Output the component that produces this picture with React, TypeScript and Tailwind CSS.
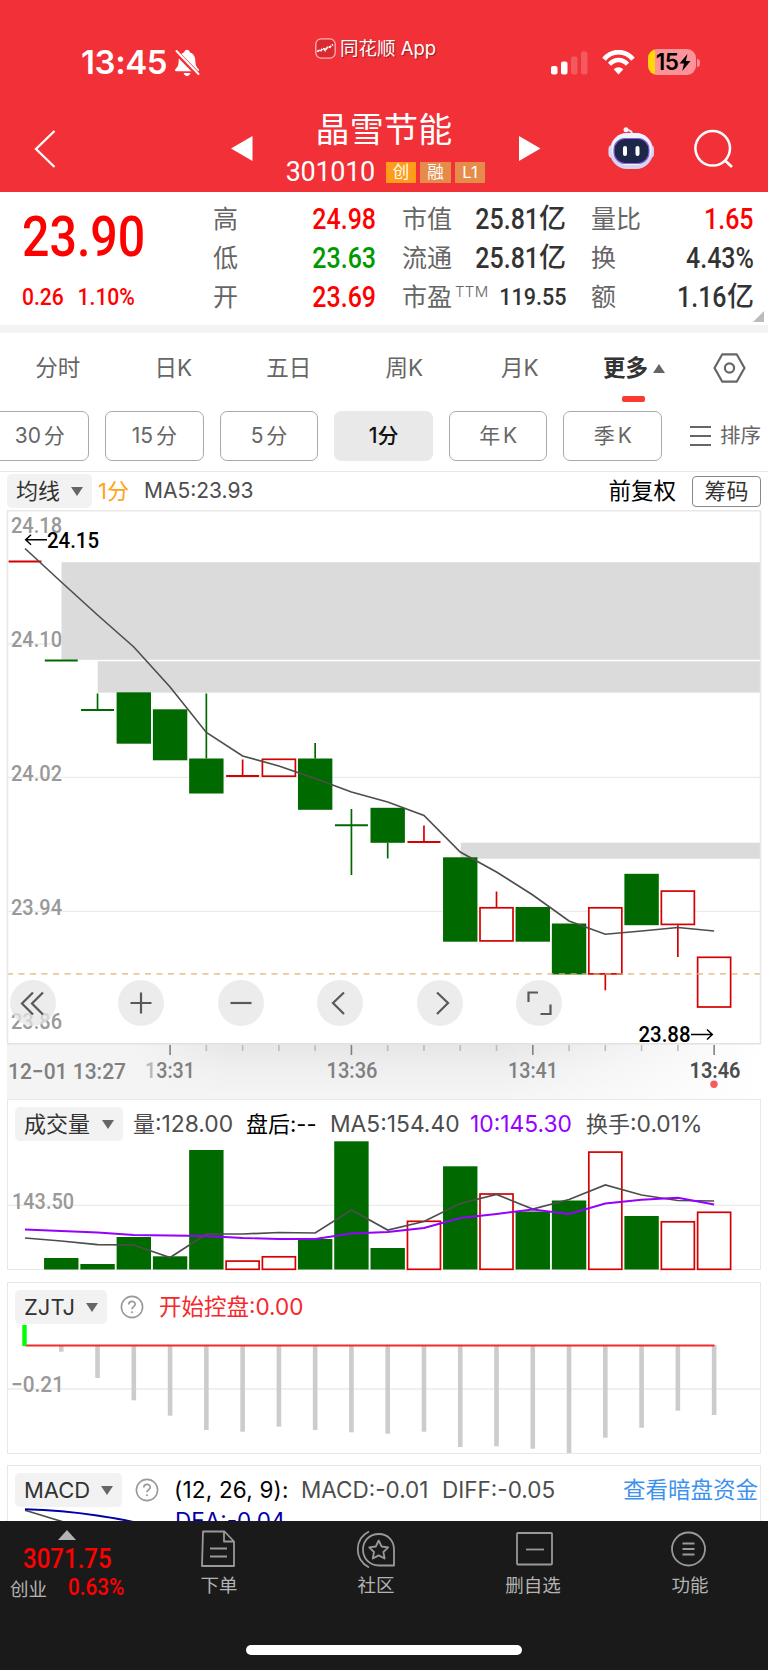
import type { ReactNode } from "react";

const X0 = 25;
const STEP = 36.27;
const cx = (i: number) => X0 + STEP * i;

const GREEN = "#006a00";
const RED = "#d60000";

type Candle = {
  kind: "up" | "down";
  top: number;
  bottom: number;
  high?: number;
  low?: number;
};

// top === bottom draws a flat bar
const candles: Candle[] = [
  { kind: "up", top: 561.5, bottom: 561.5 },
  { kind: "down", top: 660.5, bottom: 660.5 },
  { kind: "down", top: 710, bottom: 710, high: 693.5 },
  { kind: "down", top: 692.3, bottom: 743.7 },
  { kind: "down", top: 709.3, bottom: 760.3 },
  { kind: "down", top: 758.5, bottom: 793.5, high: 693.5 },
  { kind: "up", top: 776, bottom: 776, high: 759.5 },
  { kind: "up", top: 758.5, bottom: 777 },
  { kind: "down", top: 758.5, bottom: 809.8, high: 743 },
  { kind: "down", top: 825.3, bottom: 825.3, high: 809, low: 875 },
  { kind: "down", top: 807.8, bottom: 842.8, low: 858.5 },
  { kind: "up", top: 842, bottom: 842, high: 825.5 },
  { kind: "down", top: 857.3, bottom: 941.7 },
  { kind: "up", top: 907, bottom: 941.7, high: 891.5 },
  { kind: "down", top: 907, bottom: 941.7 },
  { kind: "down", top: 923.5, bottom: 974.5 },
  { kind: "up", top: 907, bottom: 974.7, low: 990.3 },
  { kind: "down", top: 873.8, bottom: 925.2 },
  { kind: "up", top: 890.3, bottom: 925.2, low: 957 },
  { kind: "up", top: 956.5, bottom: 1007.8 },
];

const ma5 = [
  548.5, 582, 615, 647, 687, 732.5, 756, 766, 778.5, 792, 802, 815.5, 852, 872,
  895, 921, 934.3, 931, 927.5, 931,
];

const volumeTops = [
  0, 1258, 1264, 1237, 1256.3, 1150, 1260.3, 1256, 1239, 1141.3, 1248, 1220.5,
  1166.3, 1193.2, 1211.5, 1200.5, 1151.3, 1216, 1221, 1211.5,
];
const volumeUp = [6, 7, 11, 13, 16, 18, 19];
const volMa5 = [
  1238, 1241, 1244.7, 1245, 1257.5, 1234, 1234, 1232.5, 1233, 1210, 1230, 1221.5,
  1203.5, 1194.5, 1209, 1199.5, 1185, 1195, 1200.5, 1201,
];
const volMa10 = [
  1229.5, 1231, 1232.5, 1235, 1235.5, 1236, 1238, 1239, 1239, 1233.5, 1232, 1228,
  1218, 1214, 1209.5, 1214, 1203.5, 1199.7, 1197.7, 1204.5,
];

const zjtjBottoms = [
  1346, 1351.7, 1378, 1400.3, 1415.7, 1430, 1431.7, 1426.7, 1430, 1432.3, 1433.7,
  1431.7, 1447, 1446.3, 1448.7, 1453, 1437.7, 1427.7, 1410.7, 1415,
];

const points = (ys: number[]) => ys.map((y, i) => `${cx(i)},${y}`).join(" ");

function Label({
  x,
  y,
  w,
  children,
  fill = "#999",
  weight = 500,
}: {
  x: number;
  y: number;
  w: number;
  children: ReactNode;
  fill?: string;
  weight?: number;
}) {
  return (
    <text
      x={x}
      y={y}
      textLength={w}
      lengthAdjust="spacingAndGlyphs"
      fill={fill}
      fontSize={22.5}
      fontWeight={weight}
    >
      {children}
    </text>
  );
}

function StatusBar() {
  return (
    <div className="flex h-[100px] items-start text-white">
      <div className="ml-[81px] mt-[42px] flex w-[234px] items-center">
        <span className="w-[93px] font-[Inter] text-[33px] font-semibold leading-[41px] tracking-[-0.4px]">
          13:45
        </span>
        <svg width="26" height="28" viewBox="0 0 26 28" fill="#fff">
          <path d="M13 0.8c1.6 0 2.6 1 2.8 2.4 3.6 1.1 5.4 4.1 5.5 7.8.1 5.4 1.1 7.2 3.2 9 .9.9.6 2.3-.8 2.3H2.3c-1.4 0-1.7-1.4-.8-2.3 2.1-1.800 3.100-3.600 3.200-9 .1-3.700 1.900-6.700 5.500-7.800C10.400 1.800 11.400.8 13 .8z" />
          <path d="M9.600 24h6.800c-.4 1.700-1.600 2.900-3.400 2.900S10 25.700 9.600 24z" />
          <path d="M1.500 2.500l23.500 24" stroke="#f23037" strokeWidth="5" />
          <path d="M2.500 2l22 23" stroke="#fff" strokeWidth="2" strokeLinecap="round" />
        </svg>
      </div>
      <div className="mt-[35px] flex h-[26px] w-[236px] items-center gap-[4px]">
        <svg width="21" height="21" viewBox="0 0 21 21" fill="none">
          <rect x="0.8" y="0.8" width="19.400" height="19.400" rx="5.500" fill="#d92a30" stroke="#ffb3b5" strokeWidth="1.300" />
          <path d="M2 13.500l2.200-1 1.300.8 2-2.800 1.600.4 1.200 1.500 2.200-3.300 2 .2L18 6.500" stroke="#fff" strokeWidth="1.800" strokeDasharray="3 1" />
        </svg>
        <span className="whitespace-nowrap text-[18.500px] leading-[26px] [text-shadow:1px_1px_1px_#0006]">
          同花顺 App
        </span>
      </div>
      <div className="mt-[50px] flex items-center">
        <svg width="37" height="24" viewBox="0 0 37 24" fill="#fff">
          <rect x="0" y="15" width="6.500" height="8.500" rx="2" />
          <rect x="10" y="10.500" width="6.500" height="13" rx="2" />
          <rect x="20" y="5.500" width="6.500" height="18" rx="2" opacity="0.200" />
          <rect x="30" y="0.500" width="6.500" height="23" rx="2" opacity="0.200" />
        </svg>
        <svg className="ml-[14px]" width="33" height="25" viewBox="0 0 33 25" fill="none">
          <path d="M2 9.200C10-0.300 23-0.300 31 9.200" stroke="#fff" strokeWidth="4.600" />
          <path d="M7.500 14.300c5.200-5.700 12.800-5.700 18 0" stroke="#fff" strokeWidth="4.400" />
          <path d="M16.500 24.500l-4.800-5.300c2.800-2.700 6.800-2.700 9.600 0z" fill="#fff" />
        </svg>
        <div className="-mt-px ml-[13px] flex h-[26px] w-[48px] items-center justify-center overflow-hidden rounded-[9px] bg-[linear-gradient(90deg,#ffd60a_15%,#fb9398_15%)] pl-[3px] text-black">
          <span className="font-[Inter] text-[22.500px] font-semibold leading-[26px] tracking-[-0.500px]">15</span>
          <svg className="ml-px" width="12" height="17" viewBox="0 0 11 17">
            <path d="M8 0L0 9.500h4.500L2.800 17 11 7H6.300z" fill="#000" />
          </svg>
        </div>
        <div className="ml-[1px] h-[8px] w-[3px] rounded-r-full bg-[#f98d91]" />
      </div>
    </div>
  );
}

function Tag({ children, first }: { children: string; first?: boolean }) {
  return (
    <span
      className={`flex h-[21px] w-[30.500px] items-center justify-center text-[16.500px] leading-none ${
        first ? "bg-[#ff9c1a]" : "bg-[#e58c4a]"
      }`}
    >
      {children}
    </span>
  );
}

function TitleBar() {
  return (
    <div className="flex h-[92px] items-start text-white">
      <svg className="ml-[34px] mt-[30px]" width="22" height="38" viewBox="0 0 22 38" fill="none">
        <path d="M20.500 1L2 19l18.500 18" stroke="#fff" strokeWidth="2.300" />
      </svg>
      <svg className="ml-[175px] mt-[36px]" width="22" height="25" viewBox="0 0 22 25">
        <path d="M0 12.500L21.500 0v25z" fill="#fff" />
      </svg>
      <div className="ml-[31px] flex w-[203px] flex-col items-center">
        <h1 className="-ml-[3px] mt-[11px] whitespace-nowrap text-[34px] font-normal leading-[38px] tracking-[0.200px]">
          晶雪节能
        </h1>
        <div className="mt-[10px] flex items-center gap-[4px]">
          <span className="w-[96px] font-[Roboto] text-[27px] leading-[27px] tracking-[-0.300px]">
            301010
          </span>
          <Tag first>创</Tag>
          <Tag>融</Tag>
          <Tag>L1</Tag>
        </div>
      </div>
      <svg className="ml-[32px] mt-[36px]" width="22" height="25" viewBox="0 0 22 25">
        <path d="M21.500 12.500L0 0v25z" fill="#fff" />
      </svg>
      <svg className="ml-[67px] mt-[27px]" width="47" height="43" viewBox="0 0 47 43">
        <path d="M24 7c0-3-2-3.800-5-4" stroke="#e9e6f7" strokeWidth="2" fill="none" />
        <circle cx="18" cy="2.800" r="2.500" fill="#f4f0fb" />
        <rect x="0.500" y="18" width="8" height="13" rx="4" fill="#dcdcf5" />
        <rect x="38" y="18" width="8" height="13" rx="4" fill="#d0d1f2" />
        <rect x="2" y="6" width="43" height="36" rx="17" fill="#d5d5f1" />
        <rect x="3.500" y="6" width="40" height="32" rx="15.500" fill="#f3f2fc" />
        <rect x="6" y="11.500" width="35" height="25" rx="11" fill="#1d2748" stroke="#8a60e8" strokeWidth="1.200" />
        <rect x="15" y="19" width="4" height="10" rx="2" fill="#fff" />
        <rect x="27.500" y="19" width="4" height="10" rx="2" fill="#fff" />
      </svg>
      <svg className="ml-[39px] mt-[29px]" width="41" height="41" viewBox="0 0 41 41" fill="none">
        <circle cx="18.700" cy="19.300" r="17.300" stroke="#fff" strokeWidth="2.500" />
        <path d="M30.500 31l7.500 7" stroke="#fff" strokeWidth="2.800" />
      </svg>
    </div>
  );
}

function Value({ children, yi, className = "text-[#333]" }: { children: string; yi?: boolean; className?: string }) {
  return (
    <span className={`flex items-center justify-end ${className}`}>
      <span className="-ml-[26px] origin-right scale-x-[0.860] font-[Roboto] text-[29px] font-medium">{children}</span>
      {yi && <span className="text-[27px] font-medium">亿</span>}
    </span>
  );
}

function Quote() {
  return (
    <section className="relative flex h-[141px] border-b-8 border-[#f3f3f3] pt-[8px] text-[25px] text-[#666]">
      <div className="w-[213px] pl-[22px] font-[Roboto] font-medium text-[#f00]">
        <div className="mt-[4px] origin-left scale-x-[0.870] text-[55.500px] leading-[68px]">23.90</div>
        <div className="mt-[6px] flex origin-left scale-x-[0.860] gap-[16px] text-[24.500px] leading-[37px]">
          <span>0.26</span>
          <span>1.10%</span>
        </div>
      </div>
      <div className="grid h-[116px] w-[163px] grid-cols-[1fr_auto] grid-rows-3 items-center leading-[36px]">
        <span>高</span>
        <Value className="text-[#f00]">24.98</Value>
        <span>低</span>
        <Value className="text-[#009a00]">23.63</Value>
        <span>开</span>
        <Value className="text-[#f00]">23.69</Value>
      </div>
      <div className="ml-[26px] grid h-[116px] w-[164px] grid-cols-[1fr_auto] grid-rows-3 items-center leading-[36px]">
        <span>市值</span>
        <Value yi>25.81</Value>
        <span>流通</span>
        <Value yi>25.81</Value>
        <span className="flex whitespace-nowrap">
          市盈
          <span className="ml-[3px] mt-[-5px] font-[Inter] text-[15px] font-light tracking-[0.300px]">TTM</span>
        </span>
        <span className="flex justify-end text-[#333]">
          <span className="-ml-[26px] origin-right scale-x-[0.880] font-[Roboto] text-[24.500px] font-medium">
            119.55
          </span>
        </span>
      </div>
      <div className="ml-[25px] grid h-[116px] w-[163px] grid-cols-[1fr_auto] grid-rows-3 items-center leading-[36px]">
        <span>量比</span>
        <Value className="text-[#f00]">1.65</Value>
        <span>换</span>
        <Value>4.43%</Value>
        <span>额</span>
        <Value yi>1.16</Value>
      </div>
      <svg className="absolute bottom-[3px] right-[4px]" width="11" height="11" viewBox="0 0 11 11">
        <path d="M11 0v11H0z" fill="#bbb" />
      </svg>
    </section>
  );
}

function Tabs() {
  return (
    <nav className="flex h-[78px] items-start pt-[16px] text-[22.500px] leading-[38px] text-[#666]">
      {["分时", "日K", "五日", "周K", "月K"].map((t) => (
        <span key={t} className="w-[115.500px] text-center">
          {t}
        </span>
      ))}
      <div className="relative ml-[25.500px] flex w-[82px] items-center font-bold text-[#333]">
        更多
        <svg className="ml-[5px]" width="12" height="9" viewBox="0 0 12 9">
          <path d="M6 0l6 9H0z" fill="#666" />
        </svg>
        <span className="absolute left-[19px] top-[47px] h-[6px] w-[23px] rounded-[2px] bg-[#fb3a30]" />
      </div>
      <svg className="ml-[28px] mt-[4px]" width="33" height="30" viewBox="0 0 33 30" fill="none" stroke="#666">
        <path d="M9.300 1.300h14.400L31.500 15l-7.800 13.700H9.300L1.500 15z" strokeWidth="2.200" strokeLinejoin="round" />
        <circle cx="16.500" cy="15" r="4.600" strokeWidth="2.200" />
      </svg>
    </nav>
  );
}

function Periods() {
  return (
    <div className="flex h-[60px] items-start gap-[16px] overflow-hidden text-[21px] text-[#666]">
      {["30 分", "15 分", "5 分", "1分", "年 K", "季 K"].map((p) => (
        <span
          key={p}
          className={`flex h-[50px] w-[98.600px] shrink-0 items-center justify-center rounded-[7px] border-[1.500px] [word-spacing:-3px] first:-ml-[9.500px] ${
            p === "1分"
              ? "border-[#e9e9e9] bg-[#e9e9e9] font-medium text-[#111]"
              : "border-[#aaa]"
          }`}
        >
          {p}
        </span>
      ))}
      <span className="ml-[12px] flex h-[50px] shrink-0 items-center gap-[9px] text-[20.500px]">
        <svg width="21" height="20" viewBox="0 0 21 20" stroke="#666" strokeWidth="1.800">
          <path d="M0 1h21M0 10h21M0 19h21" />
        </svg>
        排序
      </span>
    </div>
  );
}

function Chip({ children, className }: { children: ReactNode; className: string }) {
  return (
    <span
      className={`flex h-[34px] shrink-0 items-center justify-between rounded-[5px] bg-[#f2f2f2] pl-[9px] pr-[9px] text-[#333] ${className}`}
    >
      {children}
      <svg width="12" height="9" viewBox="0 0 12 9">
        <path d="M0 0h12L6 9z" fill="#666" />
      </svg>
    </span>
  );
}

function Help() {
  return (
    <svg className="shrink-0" width="24" height="24" viewBox="0 0 24 24" fill="none" stroke="#999">
      <circle cx="12" cy="12" r="10.600" strokeWidth="1.600" />
      <path d="M8.800 9.600c0-4.200 6.400-4.200 6.400-.3 0 2.400-3.200 2.400-3.200 5" strokeWidth="1.700" />
      <circle cx="12" cy="17.200" r="0.700" fill="#999" strokeWidth="0.800" />
    </svg>
  );
}

function KLine() {
  const tools = [
    { left: "left-[10px]", d: "M23 12.500L12 23.500l11 11M33 12.500L22 23.500l11 11" },
    { left: "left-[118px]", d: "M23 12.500v21M12.500 23h21" },
    { left: "left-[218px]", d: "M12.500 23h21" },
    { left: "left-[317px]", d: "M27 12.500L16 23l11 11" },
    { left: "left-[416.500px]", d: "M20 12.500L31 23 20 34" },
    { left: "left-[515.500px]", d: "M12.500 22v-9.500H22M34.500 24.500V34H24.500" },
  ];
  return (
    <section className="relative h-[589px]">
      <svg width="768" height="589" viewBox="0 510 768 589" fontFamily="Roboto, sans-serif">
        <defs>
          <linearGradient id="axis" x1="0" y1="0" x2="0" y2="1">
            <stop offset="0" stopColor="#e6e6e6" />
            <stop offset="0.5" stopColor="#f0f0f0" />
            <stop offset="1" stopColor="#f5f5f5" />
          </linearGradient>
          <linearGradient id="fade" x1="0" y1="0" x2="1" y2="0">
            <stop offset="0" stopColor="#f4f4f4" />
            <stop offset="0.17" stopColor="#f4f4f4" />
            <stop offset="0.3" stopColor="#f4f4f4" stopOpacity="0" />
            <stop offset="0.65" stopColor="#fff" stopOpacity="0" />
            <stop offset="1" stopColor="#fff" />
          </linearGradient>
        </defs>
        <path d="M7 644H761M7 777.300H761M7 911.300H761" stroke="#ebebeb" strokeWidth="1.300" />
        <g fill="#dbdbdb">
          <rect x="61.500" y="562.300" width="699" height="97.500" />
          <rect x="97.700" y="661.300" width="663" height="31.300" />
          <rect x="460.700" y="842.700" width="300" height="16" />
        </g>
        {candles.map((c, i) => {
          const x = cx(i);
          const color = c.kind === "up" ? RED : GREEN;
          return (
            <g key={i} stroke={color} strokeWidth="1.700">
              {c.high && <path d={`M${x} ${c.high}V${c.top}`} />}
              {c.low && <path d={`M${x} ${c.bottom}V${c.low}`} />}
              {c.top === c.bottom ? (
                <path d={`M${x - 16.5} ${c.top}H${x + 16.5}`} strokeWidth="2" />
              ) : c.kind === "down" ? (
                <rect x={x - 17.2} y={c.top} width="34.400" height={c.bottom - c.top} fill={GREEN} stroke="none" />
              ) : (
                <rect x={x - 16.5} y={c.top + 0.8} width="33" height={c.bottom - c.top - 1.6} fill="#fff" />
              )}
            </g>
          );
        })}
        <path d="M7 973.800H761" stroke="#dcb070" strokeOpacity="0.700" strokeWidth="1.700" strokeDasharray="6 5.500" />
        <polyline points={points(ma5)} fill="none" stroke="#4d4d4d" strokeWidth="1.600" />
        <Label x={11} y={532.5} w={51}>24.18</Label>
        <Label x={11} y={646.7} w={51}>24.10</Label>
        <Label x={11} y={780.5} w={51}>24.02</Label>
        <Label x={11} y={914.5} w={51}>23.94</Label>
        <Label x={11} y={1029} w={51}>23.86</Label>
        <g stroke="#000" strokeWidth="1.500" fill="none">
          <path d="M47 539.700H26M31 534.700l-5.300 5 5.300 5" />
          <path d="M691 1034.500H712M707 1029.500l5.300 5-5.300 5" />
        </g>
        <Label x={47} y={547.5} w={52} fill="#000">24.15</Label>
        <Label x={638.5} y={1042.3} w={52} fill="#000">23.88</Label>

        <rect x="7" y="1044" width="754" height="55" fill="url(#axis)" />
        <rect x="7" y="1044" width="754" height="55" fill="url(#fade)" />
        {candles.map((_, i) => {
          if (i < 4) return null;
          const major = i % 5 === 4;
          return (
            <path
              key={i}
              d={`M${cx(i)} 1045v${major ? 10 : 6}`}
              stroke={major ? "#808080" : "#bbb"}
              strokeWidth="1.600"
            />
          );
        })}
        <path d="M7.500 1044V510.700H760.500V1044" fill="none" stroke="#e8e8e8" strokeWidth="1.500" />
        <path d="M7 1043.700H761" stroke="#e2e2e2" strokeWidth="1.500" />
        <Label x={8} y={1078.5} w={118} fill="#808080">12−01 13:27</Label>
        <Label x={145} y={1078} w={50} fill="#808080">
          <tspan fill="#b8b8b8">1</tspan>3:31
        </Label>
        <Label x={326.5} y={1078} w={51} fill="#808080">13:36</Label>
        <Label x={508} y={1078} w={50} fill="#808080">13:41</Label>
        <Label x={689.5} y={1078} w={51} fill="#4d4d4d" weight={600}>13:46</Label>
        <circle cx="714" cy="1084.300" r="3.700" fill="#f65b5b" />
      </svg>
      {tools.map((t) => (
        <button key={t.left} className={`absolute top-[470px] size-[46px] rounded-full bg-[#e6e6e6]/75 ${t.left}`}>
          <svg width="46" height="46" viewBox="0 0 46 46" fill="none" stroke="#595959" strokeWidth="2.200">
            <path d={t.d} />
          </svg>
        </button>
      ))}
    </section>
  );
}

function Volume() {
  return (
    <section className="mx-[7px] h-[171px] border-[1.500px] border-[#e8e8e8]">
      <div className="flex h-[42px] items-center whitespace-nowrap pl-[7px] pt-[6px] text-[22.800px] text-[#4d4d4d]">
        <Chip className="w-[108px] text-[22px]">成交量</Chip>
        <span className="ml-[10px] w-[113px]">
          <span className="text-[22px]">量</span>:128.00
        </span>
        <span className="w-[84px] text-[22px] text-black">盘后:--</span>
        <span className="w-[140px]">MA5:154.40</span>
        <span className="w-[116px] text-[#9500ff]">10:145.30</span>
        <span>
          <span className="text-[22px]">换手</span>:0.01%
        </span>
      </div>
      <svg className="-ml-[8px] block" width="768" height="128" viewBox="0 1142 768 128" overflow="visible" fontFamily="Roboto, sans-serif">
        <path d="M8 1205.300H760" stroke="#ebebeb" strokeWidth="1.300" />
        <Label x={12} y={1209} w={62}>143.50</Label>
        {volumeTops.map((y, i) =>
          i === 0 ? null : volumeUp.includes(i) ? (
            <rect key={i} x={cx(i) - 16.5} y={y + 0.8} width="33" height={1268.5 - y} fill="#fff" stroke={RED} strokeWidth="1.700" />
          ) : (
            <rect key={i} x={cx(i) - 17.2} y={y} width="34.400" height={1269.5 - y} fill={GREEN} />
          ),
        )}
        <polyline points={points(volMa5)} fill="none" stroke="#4d4d4d" strokeWidth="1.700" />
        <polyline points={points(volMa10)} fill="none" stroke="#9500ff" strokeWidth="1.900" />
      </svg>
    </section>
  );
}

function Zjtj() {
  return (
    <section className="mx-[7px] mt-[12px] h-[172px] border-[1.500px] border-[#e8e8e8]">
      <div className="flex h-[42px] items-center whitespace-nowrap pl-[7px] pt-[6px] text-[22px]">
        <Chip className="w-[92px]">ZJTJ</Chip>
        <span className="ml-[13px] flex">
          <Help />
        </span>
        <span className="ml-[15px] text-[22.500px] text-[#f5282d]">开始控盘:0.00</span>
      </div>
      <svg className="-ml-[8px] block" width="768" height="128" viewBox="0 1325 768 128" fontFamily="Roboto, sans-serif">
        <path d="M8 1389H760" stroke="#ebebeb" strokeWidth="1.400" />
        <Label x={11} y={1392.3} w={53}>−0.21</Label>
        {zjtjBottoms.map((y, i) =>
          i === 0 ? null : (
            <rect key={i} x={cx(i) - 2.3} y="1345" width="4.600" height={y - 1345} fill="#ccc" />
          ),
        )}
        <path d="M25 1345.400H714.500" stroke="#f5282d" strokeWidth="2" />
        <path d="M24.500 1325V1346" stroke="#00ff00" strokeWidth="4.400" />
      </svg>
    </section>
  );
}

function Macd() {
  return (
    <section className="relative mx-[7px] mt-[11px] h-[56px] overflow-hidden border-[1.500px] border-b-0 border-[#e8e8e8]">
      <div className="flex h-[42px] items-center whitespace-nowrap pl-[7px] pt-[6px] text-[22.500px] text-[#4d4d4d]">
        <Chip className="w-[107px] text-[22px]">MACD</Chip>
        <span className="ml-[13px] flex">
          <Help />
        </span>
        <span className="ml-[15px] w-[127px] tracking-[0.200px] text-black">(12, 26, 9):</span>
        <span className="w-[141px]">MACD:-0.01</span>
        <span>DIFF:-0.05</span>
        <span className="ml-auto mr-[2px] text-[22.500px] text-[#3e92ee]">查看暗盘资金</span>
      </div>
      <div className="-mt-[3px] pl-[167px] text-[22.500px] leading-[32px] text-[#0000a8]">DEA:-0.04</div>
      <svg className="absolute left-0 top-[42px]" width="160" height="14" viewBox="8 1508 160 14" fill="none">
        <path d="M25 1510.300L62 1521.500L90 1534" stroke="#4d4d4d" strokeWidth="1.700" />
        <path d="M25 1509.300C50 1510 70 1511.500 97 1515.500S120 1519 140 1523.500" stroke="#0000a8" strokeWidth="1.900" />
      </svg>
    </section>
  );
}

function BottomBar() {
  const items = [
    {
      label: "下单",
      icon: (
        <>
          <path d="M3 1.500h21.500L34 11.500V36H2z" />
          <path d="M24 1.500V11.500H34M10 18.500h17M10 26.500h17" />
        </>
      ),
    },
    {
      label: "社区",
      icon: (
        <>
          <path d="M22 4C12 4 6 11 6 19.500S12 35.500 22 35.500H37V19.500C37 10.500 30.500 4 22 4z" />
          <path d="M12 1.500C-3 9-3 29.500 12 37.500" />
          <path d="M21.700 10.500l2.900 6 6.600.9-4.800 4.600 1.200 6.500-5.900-3.100-5.900 3.100 1.200-6.500-4.800-4.600 6.600-.9z" />
        </>
      ),
    },
    {
      label: "删自选",
      icon: (
        <>
          <rect x="3" y="3" width="35" height="31.500" rx="1" />
          <path d="M12 19.500h18" />
        </>
      ),
    },
    {
      label: "功能",
      icon: (
        <>
          <circle cx="17.500" cy="19" r="16.500" />
          <path d="M11.500 13.500h12M11.500 19h12M11.500 24.500h12" />
        </>
      ),
    },
  ];
  return (
    <footer className="h-[149px] bg-[#1a1a1a] text-[#b3b3b3]">
      <div className="flex h-[124px] items-start text-[18.500px]">
        <div className="w-[200px] shrink-0 pt-[9px]">
          <svg className="ml-[58px]" width="18" height="10" viewBox="0 0 18 10">
            <path d="M9 0l9 10H0z" fill="#b3b3b3" />
          </svg>
          <div className="ml-[23px] mt-[4px] origin-left scale-x-[0.890] font-[Roboto] text-[27px] font-medium leading-[30px] text-[#f00]">
            3071.75
          </div>
          <div className="mt-[1px] flex items-center pl-[10px] leading-[28px]">
            <span className="w-[58px]">创业</span>
            <span className="-mt-[2px] origin-left scale-x-[0.900] font-[Roboto] text-[23px] font-medium text-[#f00]">
              0.63%
            </span>
          </div>
        </div>
        <div className="flex gap-[119px]">
          {items.map((it) => (
            <div key={it.label} className="flex w-[38px] flex-col items-center pt-[9px]">
              <svg className="shrink-0" width="38" height="39" viewBox="0 0 38 39" fill="none" stroke="#999" strokeWidth="1.800" strokeLinejoin="round" overflow="visible">
                {it.icon}
              </svg>
              <span className="mt-[2px] whitespace-nowrap leading-[28px]">{it.label}</span>
            </div>
          ))}
        </div>
      </div>
      <div className="ml-[246px] h-[10px] w-[276px] rounded-full bg-white" />
    </footer>
  );
}

export default function App() {
  return (
    <div className="h-[1670px] w-[768px] overflow-hidden bg-white font-[Inter,'Noto_Sans_CJK_SC',sans-serif]">
      <header className="h-[192px] bg-[#f23037]">
        <StatusBar />
        <TitleBar />
      </header>
      <Quote />
      <Tabs />
      <Periods />
      <div className="flex h-[39px] items-center whitespace-nowrap border-t-[1.500px] border-[#e8e8e8] pl-[7px] text-[22px]">
        <Chip className="w-[85px]">均线</Chip>
        <span className="ml-[6px] w-[46px] text-[#ffa31a]">1分</span>
        <span className="text-[21px] text-[#4d4d4d]">MA5:23.93</span>
        <span className="ml-auto text-[22.500px] text-black">前复权</span>
        <span className="ml-[16px] mr-[7px] flex h-[31px] w-[69px] items-center justify-center rounded-[4px] border-[1.500px] border-[#888] text-[#333]">
          筹码
        </span>
      </div>
      <KLine />
      <Volume />
      <Zjtj />
      <Macd />
      <BottomBar />
    </div>
  );
}
